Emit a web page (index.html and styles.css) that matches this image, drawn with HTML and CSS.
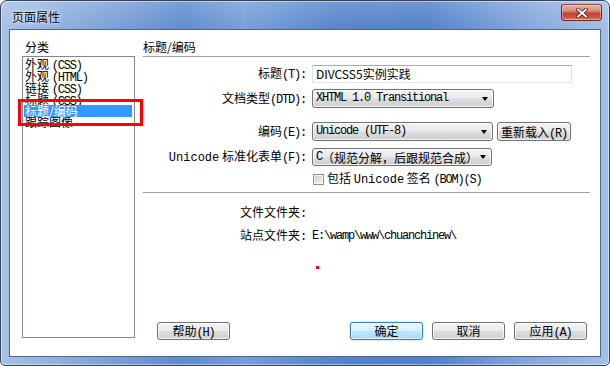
FILE: index.html
```html
<!DOCTYPE html>
<html lang="zh-CN">
<head>
  <meta charset="UTF-8">
  <title>页面属性</title>
  <link rel="stylesheet" href="styles.css">
</head>
<body>
  <div class="window">
    <div class="titlebar">
      <span class="title">页面属性</span>
      <span class="close">
        <svg width="12" height="10" viewBox="0 0 12 10">
          <path d="M2 1.5 L10 8.5 M10 1.5 L2 8.5" stroke="#5a2a24" stroke-width="3.6" stroke-linecap="square"/>
          <path d="M2 1.5 L10 8.5 M10 1.5 L2 8.5" stroke="#fff" stroke-width="1.8" stroke-linecap="square"/>
        </svg>
      </span>
    </div>

    <div class="client">
      <div class="category">
        <div class="cat-label">分类</div>
        <ul class="cat-list">
          <li>外观 <span class="en">(CSS)</span></li>
          <li>外观 <span class="en">(HTML)</span></li>
          <li>链接 <span class="en">(CSS)</span></li>
          <li class="under">标题 <span class="en">(CSS)</span></li>
          <li class="selected">标题/编码</li>
          <li>跟踪图像</li>
        </ul>
      </div>
      <div class="mark"></div>

      <div class="panel">
        <div class="panel-title">标题/编码</div>

        <div class="row r-title">
          <span class="lbl">标题<span class="en">(T): </span></span>
          <div class="textbox">DIVCSS5实例实践</div>
        </div>
        <div class="row r-dtd">
          <span class="lbl">文档类型<span class="en">(DTD): </span></span>
          <div class="combo w182"><span class="en">XHTML 1.0 Transitional</span><i class="arrow"></i></div>
        </div>
        <div class="row r-enc">
          <span class="lbl">编码<span class="en">(E): </span></span>
          <div class="combo w181"><span class="en">Unicode (UTF-8)</span><i class="arrow"></i></div>
          <div class="btn reload">重新载入<span class="en">(R)</span></div>
        </div>
        <div class="row r-norm">
          <span class="lbl"><span class="en wide">Unicode</span> 标准化表单<span class="en">(F): </span></span>
          <div class="combo w180"><span class="en">C</span>（规范分解，后跟规范合成）<i class="arrow"></i></div>
        </div>
        <div class="row r-bom">
          <span class="lbl"></span>
          <span class="check"></span>
          <span>包括 <span class="en wide">Unicode</span> 签名 <span class="en">(BOM)(S)</span></span>
        </div>

        <div class="sep"></div>

        <div class="row r-folder">
          <span class="lbl">文件文件夹<span class="en">: </span></span>
        </div>
        <div class="row r-site">
          <span class="lbl">站点文件夹<span class="en">: </span></span>
          <span class="en">E:\wamp\www\chuanchinew\</span>
        </div>
        <div class="dot"></div>

        <div class="actions">
          <div class="btn">帮助<span class="en">(H)</span></div>
          <div class="spacer"></div>
          <div class="btn default">确定</div>
          <div class="btn">取消</div>
          <div class="btn">应用<span class="en">(A)</span></div>
        </div>
      </div>
    </div>
  </div>
</body>
</html>
```

FILE: styles.css
```css
body {
  margin: 0;
  background: #fff;
  font-family: "Noto Sans CJK SC", sans-serif;
  font-size: 12px;
  color: #000;
}
.en {
  font-family: "Liberation Mono", monospace;
  font-size: 12px;
  letter-spacing: -1.2px;
}
.en.wide {
  letter-spacing: 0;
}

/* window frame */
.window {
  width: 610px;
  height: 366px;
  box-sizing: border-box;
  border: 1px solid #34445c;
  border-radius: 7px 7px 5px 5px;
  background:
    linear-gradient(rgba(255,255,255,0.18), rgba(255,255,255,0) 30px),
    linear-gradient(90deg, #a6c1e5 0%, #87a9db 13%, #5f8bcd 30%, #769ed8 40%, #5584ca 55%, #5080c8 70%, #82a5dc 86%, #a3bfe6 100%);
  box-shadow: inset 0 0 0 1px rgba(255,255,255,0.45);
  display: flex;
  flex-direction: column;
  overflow: hidden;
}
.titlebar {
  height: 28px;
  flex-shrink: 0;
  display: flex;
  align-items: flex-start;
  padding: 0 7px 0 11px;
}
.title {
  margin-top: 9px;
  line-height: 14px;
  text-shadow: 0 0 5px rgba(255,255,255,0.9), 0 0 2px rgba(255,255,255,0.9);
}
.close {
  margin-left: auto;
  margin-top: 3px;
  width: 41px;
  height: 17px;
  box-sizing: border-box;
  border: 1px solid #6b2a22;
  border-top-color: #8a4a40;
  border-radius: 3px 3px 4px 4px;
  background: linear-gradient(#eab1a2 0%, #d98a78 40%, #c4432f 55%, #c95a44 85%, #e08b6e 100%);
  box-shadow: inset 0 0 0 1px rgba(255,255,255,0.35);
  display: flex;
  align-items: center;
  justify-content: center;
}

/* dialog client area */
.client {
  flex: 1;
  margin: 0 8px 8px;
  border: 1px solid #52658a;
  background: #fff;
  display: flex;
  position: relative;
  padding: 10px 10px 16px 12px;
}

.category {
  width: 113px;
  margin-right: 8px;
  display: flex;
  flex-direction: column;
}
.cat-label {
  height: 16px;
  line-height: 14px;
  padding-left: 3px;
}
.cat-list {
  flex: 1;
  margin: 0 0 2px;
  padding: 1px 1px 0;
  list-style: none;
  border: 1px solid #828790;
}
.cat-list li {
  height: 12px;
  line-height: 12px;
  padding-left: 1px;
  white-space: nowrap;
}
.cat-list li.under {
  height: 11px;
}
.cat-list li.selected {
  position: relative;
  background: #3399ff;
  color: #fff;
  margin-right: 1px;
}
.cat-list li.selected + li {
  margin-top: -1px;
}
.mark {
  position: absolute;
  left: 8px;
  top: 69px;
  width: 125px;
  height: 27px;
  box-sizing: border-box;
  border: 3px solid #ff0000;
}

/* right panel */
.panel {
  flex: 1;
  display: flex;
  flex-direction: column;
}
.panel-title {
  line-height: 14px;
  padding-bottom: 2px;
  border-bottom: 1px solid #a0a0a0;
}
.row {
  display: flex;
  align-items: center;
  line-height: 14px;
  white-space: nowrap;
}
.lbl {
  width: 163px;
  margin-right: 6px;
  text-align: right;
  flex-shrink: 0;
}
.r-title { margin-top: 8px; height: 18px; }
.r-dtd { margin-top: 6px; height: 19px; }
.r-enc { margin-top: 14px; height: 19px; }
.r-norm { margin-top: 7px; height: 18px; }
.r-bom { margin-top: 6px; height: 14px; }
.r-folder { margin-top: 12px; }
.r-site { margin-top: 7px; }

.textbox {
  width: 260px;
  height: 18px;
  box-sizing: border-box;
  border: 1px solid;
  border-color: #abadb3 #dbdfe6 #e3e9ef #e2e3ea;
  padding-left: 3px;
  line-height: 16px;
}
.combo, .btn {
  height: 19px;
  box-sizing: border-box;
  border: 1px solid #707070;
  border-radius: 3px;
  background: linear-gradient(#f2f2f2 0%, #ebebeb 48%, #dddddd 52%, #cfcfcf 100%);
  box-shadow: inset 0 0 0 1px rgba(255,255,255,0.75);
  line-height: 17px;
}
.combo {
  display: flex;
  align-items: center;
  padding-left: 3px;
}
.w182 { width: 182px; }
.w181 { width: 181px; }
.w180 { width: 180px; height: 18px; }
.arrow {
  margin-left: auto;
  margin-right: 5px;
  width: 0;
  height: 0;
  border-left: 3.5px solid transparent;
  border-right: 3.5px solid transparent;
  border-top: 4px solid #000;
}
.btn {
  width: 73px;
  text-align: center;
}
.reload {
  margin-left: 4px;
  width: 74px;
}
.check {
  width: 11px;
  height: 11px;
  box-sizing: border-box;
  border: 1px solid #8e8f8f;
  background: linear-gradient(135deg, #cbcbcb, #f4f4f4);
  box-shadow: inset 0 0 0 1px #f4f4f4;
  margin: 0 3px 0 1px;
}
.sep {
  margin-top: 6px;
  border-top: 1px solid #a0a0a0;
}
.dot {
  width: 3px;
  height: 3px;
  background: #ff0000;
  margin: 22px 0 0 173px;
}

.actions {
  margin-top: auto;
  display: flex;
  gap: 9px;
  padding: 0 3px 0 14px;
}
.actions .btn {
  height: 18px;
  line-height: 16px;
}
.spacer { flex: 1; }
.btn.default {
  border-color: #3c7fb1;
  background: linear-gradient(#eaf6fd 0%, #d9f0fc 48%, #bee6fd 52%, #a7d9f5 100%);
  box-shadow: inset 0 0 0 1px rgba(255,255,255,0.6), 0 0 2px #5ec3f5;
}
```
